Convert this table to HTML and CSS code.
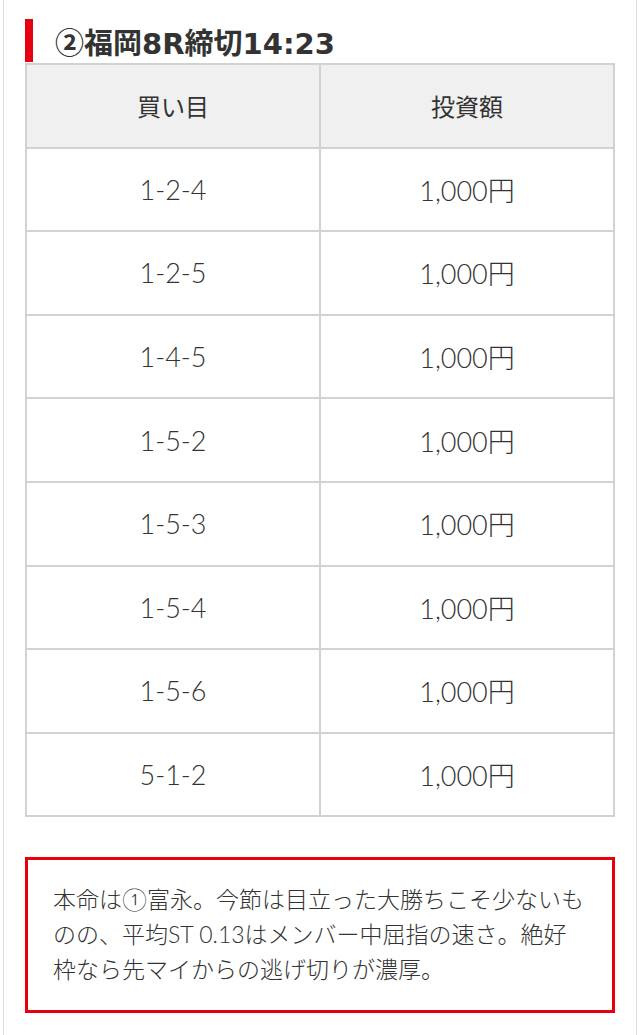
FILE: index.html
```html
<!DOCTYPE html>
<html lang="ja">
<head>
<meta charset="utf-8">
<title>福岡8R</title>
<link rel="stylesheet" href="styles.css">
</head>
<body>
<div class="page">
  <h2 class="race-title"><span class="circled">②</span>福岡8R締切14:23</h2>
  <table class="bets">
    <thead>
      <tr><th>買い目</th><th>投資額</th></tr>
    </thead>
    <tbody>
      <tr><td>1-2-4</td><td>1,000円</td></tr>
      <tr><td>1-2-5</td><td>1,000円</td></tr>
      <tr><td>1-4-5</td><td>1,000円</td></tr>
      <tr><td>1-5-2</td><td>1,000円</td></tr>
      <tr><td>1-5-3</td><td>1,000円</td></tr>
      <tr><td>1-5-4</td><td>1,000円</td></tr>
      <tr><td>1-5-6</td><td>1,000円</td></tr>
      <tr><td>5-1-2</td><td>1,000円</td></tr>
    </tbody>
  </table>
  <div class="comment">
    <p>本命は①富永。今節は目立った大勝ちこそ少ないものの、平均ST 0.13はメンバー中屈指の速さ。絶好枠なら先マイからの逃げ切りが濃厚。</p>
  </div>
</div>
</body>
</html>
```

FILE: styles.css
```css
html, body {
  margin: 0;
  padding: 0;
  background: #ffffff;
}

body {
  font-family: "Noto Sans CJK JP", "Noto Sans", sans-serif;
  color: #333333;
}

.page {
  margin: 0 3px;
  min-height: 1035px;
  box-sizing: border-box;
  border-left: 1px solid #dddddd;
  border-right: 1px solid #dddddd;
  padding: 19px 21px 20px 21px;
}

.race-title {
  margin: 0;
  height: 43px;
  box-sizing: border-box;
  border-left: 8px solid #e60012;
  padding-left: 22px;
  font-family: "DejaVu Sans", "Noto Sans CJK JP", sans-serif;
  font-size: 29px;
  font-weight: bold;
  line-height: 44px;
  color: #333333;
  white-space: nowrap;
}

.race-title .circled {
  font-family: "Noto Sans CJK JP", sans-serif;
}

.bets {
  width: 100%;
  margin-top: 1px;
  border-collapse: collapse;
  table-layout: fixed;
}

.bets th,
.bets td {
  border: 2px solid #d2d2d2;
  text-align: center;
  vertical-align: middle;
  height: 81.6px;
  padding: 0;
  font-weight: normal;
  color: #333333;
}

.bets th {
  background: #f0f0f0;
  font-family: "Noto Sans CJK JP", sans-serif;
  font-size: 24px;
}

.bets td {
  font-family: "Lato", "Noto Sans CJK JP", sans-serif;
  font-size: 27px;
  font-weight: 300;
}

.comment {
  margin-top: 40px;
  border: 3px solid #e60012;
  padding: 22px 27px 23px 25px;
}

.comment p {
  margin: 0;
  font-family: "Lato", "Noto Sans CJK JP", sans-serif;
  font-size: 23px;
  font-weight: 300;
  line-height: 35px;
  color: #333333;
}
```
